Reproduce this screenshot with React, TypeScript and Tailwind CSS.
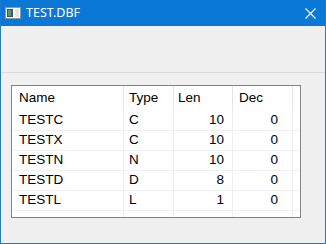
const fields = [
  { name: "TESTC", type: "C", len: 10, dec: 0 },
  { name: "TESTX", type: "C", len: 10, dec: 0 },
  { name: "TESTN", type: "N", len: 10, dec: 0 },
  { name: "TESTD", type: "D", len: 8, dec: 0 },
  { name: "TESTL", type: "L", len: 1, dec: 0 },
];

const AppIcon = () => (
  <svg width="16" height="12" viewBox="0 0 16 12" className="shrink-0">
    <rect x="0.5" y="0.5" width="15" height="11" fill="#ffffff" stroke="#8d9aa3" />
    <rect x="2" y="2" width="6" height="8" fill="#355f58" />
    <rect x="3" y="3" width="3" height="6" fill="#4f9582" />
    <rect x="10" y="2" width="4" height="8" fill="#dfe6ea" />
  </svg>
);

const CloseIcon = () => (
  <svg width="11" height="11" viewBox="0 0 11 11">
    <path d="M0.5 0.5 L10.5 10.5 M10.5 0.5 L0.5 10.5" stroke="#ffffff" strokeWidth="1.1" />
  </svg>
);

const App = () => {
  return (
    <div className="w-[326px] h-[244px] flex flex-col bg-[#f0f0f0] border-x border-b border-[#1a7ad4] font-['Liberation_Sans',Arial,sans-serif] text-[13.5px] text-black overflow-hidden">
      {/* title bar */}
      <div className="h-[26px] bg-[#0a78d7] flex items-center pl-[4px] pr-[9px] shrink-0">
        <AppIcon />
        <span className="ml-[5px] text-white text-[12.5px] font-['Noto_Sans',sans-serif] leading-none">TEST.DBF</span>
        <div className="ml-auto flex items-center">
          <CloseIcon />
        </div>
      </div>

      <div className="h-[47px] border-b border-[#dadada] shrink-0" />

      <div className="pt-[12px] pl-[10px]">
        <div className="w-[290px] h-[133px] border border-[#828282] bg-white flex flex-col">
          <div className="flex h-[25px] shrink-0">
            <div className="w-[112px] border-r border-[#e5e5e5] pl-[7px] flex items-center">Name</div>
            <div className="w-[50px] border-r border-[#e5e5e5] pl-[5px] flex items-center">Type</div>
            <div className="w-[59px] border-r border-[#e5e5e5] pl-[4px] flex items-center">Len</div>
            <div className="w-[60px] border-r border-[#e5e5e5] pl-[6px] flex items-center">Dec</div>
            <div className="flex-1" />
          </div>
          {fields.map((f) => (
            <div key={f.name} className="flex h-[20px] shrink-0 border-b border-[#f0f0f0]">
              <div className="w-[112px] border-r border-[#f0f0f0] pl-[7px] flex items-center">{f.name}</div>
              <div className="w-[50px] border-r border-[#f0f0f0] pl-[5px] flex items-center">{f.type}</div>
              <div className="w-[59px] border-r border-[#f0f0f0] pr-[8px] flex items-center justify-end">{f.len}</div>
              <div className="w-[60px] border-r border-[#f0f0f0] pr-[14px] flex items-center justify-end">{f.dec}</div>
              <div className="flex-1" />
            </div>
          ))}
          <div className="flex flex-1">
            <div className="w-[112px] border-r border-[#f0f0f0]" />
            <div className="w-[50px] border-r border-[#f0f0f0]" />
            <div className="w-[59px] border-r border-[#f0f0f0]" />
            <div className="w-[60px] border-r border-[#f0f0f0]" />
          </div>
        </div>
      </div>
    </div>
  );
};

export default App;
